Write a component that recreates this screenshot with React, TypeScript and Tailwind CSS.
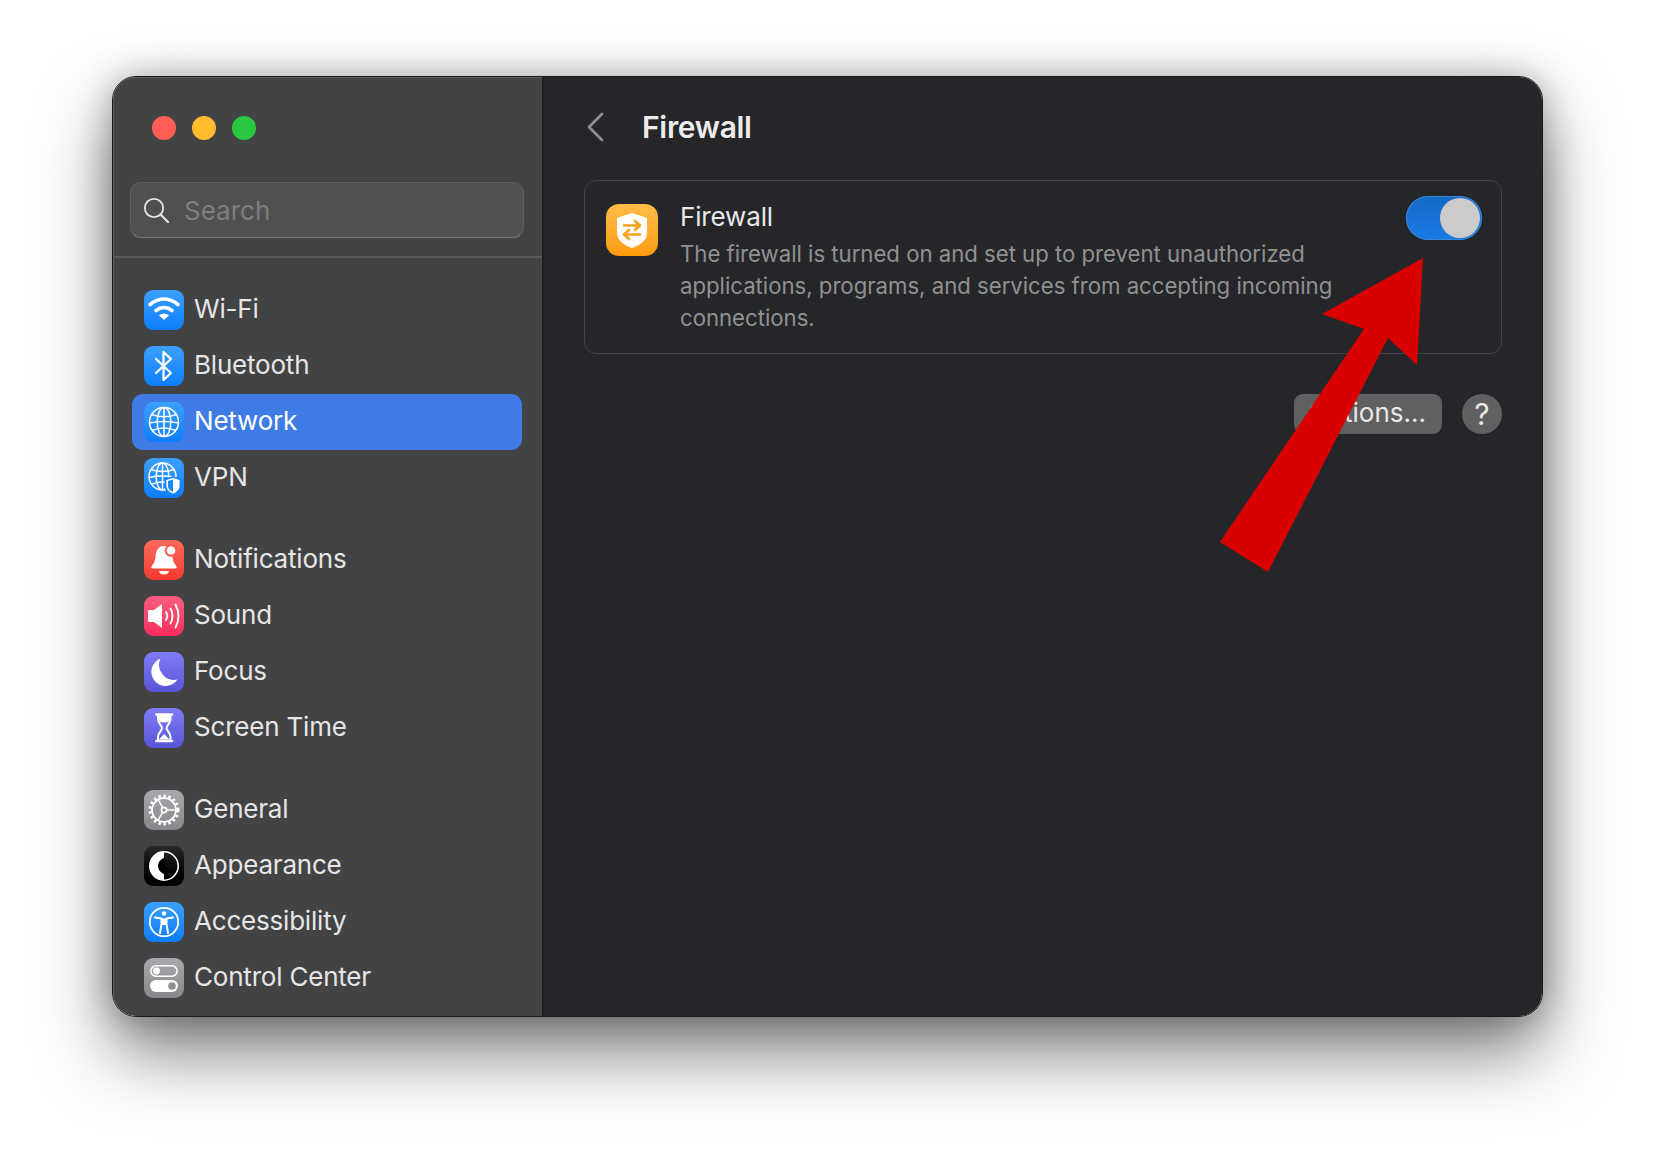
import React from 'react';

const blue = 'bg-linear-to-b from-[#3aa0ff] to-[#0a7dfb]';
const gray = 'bg-linear-to-b from-[#a9a9ad] to-[#87878b]';
const violet = 'bg-linear-to-b from-[#7f7cf6] to-[#5856d6]';

const Globe: React.FC<{ cx?: number; cy?: number; r?: number }> = ({ cx = 20, cy = 20, r = 14.5 }) => {
    const k = r / 14.5;
    return (
        <g transform={`translate(${cx} ${cy}) scale(${k})`} fill="none" stroke="white" strokeWidth="1.6">
            <circle r="14.5" />
            <ellipse rx="6.8" ry="14.5" />
            <path d="M0 -14.5V14.5" />
            <path d="M-12.5 -7.5Q0 -3 12.5 -7.5" />
            <path d="M-14.5 1Q0 -2 14.5 1" />
            <path d="M-12 8.5Q0 3.5 12 8.5" />
        </g>
    );
};

const WifiGlyph = () => (
    <svg viewBox="0 0 40 40" className="w-10 h-10">
        <g fill="none" stroke="white" strokeWidth="3.6" strokeLinecap="round">
            <path d="M6 14.5Q20 3.5 34 14.5" />
            <path d="M12 20.5Q20 14.5 28 20.5" />
        </g>
        <path d="M20 30L15 25.2Q20 22 25 25.2Z" fill="white" />
    </svg>
);

const BluetoothGlyph = () => (
    <svg viewBox="0 0 40 40" className="w-10 h-10">
        <path d="M12 13L27 27L19.5 34V6L27 13L12 27" fill="none" stroke="white" strokeWidth="2.3" strokeLinejoin="round" strokeLinecap="round" />
    </svg>
);

const NetworkGlyph = () => (
    <svg viewBox="0 0 40 40" className="w-10 h-10">
        <Globe />
    </svg>
);

const VpnGlyph = () => (
    <svg viewBox="0 0 40 40" className="w-10 h-10">
        <Globe cx={18.5} cy={18.5} r={13.5} />
        <path d="M29 19L36.5 21.5V28C36.5 32 33 35 29 36.5C25 35 21.5 32 21.5 28V21.5Z" fill="white" stroke="#1a86fb" strokeWidth="1.8" />
        <path d="M29 21.5V34C26 32.8 24 30.5 24 28V23Z" fill="#1a86fb" />
    </svg>
);

const BellGlyph = () => (
    <svg viewBox="0 0 40 40" className="w-10 h-10">
        <path d="M20 6C13.5 6 12 11 11.5 17C11 22 9 24 7.5 26.5C7 27.5 7.5 28.5 9 28.5H31C32.5 28.5 33 27.5 32.5 26.5C31 24 29 22 28.5 17C28 11 26.5 6 20 6Z" fill="white" />
        <path d="M15 31H25C24.5 33.5 22.5 34.5 20 34.5C17.5 34.5 15.5 33.5 15 31Z" fill="white" />
        <circle cx="27" cy="10.5" r="6.3" fill="#fb5a4d" />
        <circle cx="27" cy="10.5" r="4.3" fill="white" />
    </svg>
);

const SoundGlyph = () => (
    <svg viewBox="0 0 40 40" className="w-10 h-10">
        <path d="M4 15.5Q4 14 5.5 14H10L18 8V32L10 26H5.5Q4 26 4 24.5Z" fill="white" />
        <g fill="none" stroke="white" strokeWidth="1.9" strokeLinecap="round">
            <path d="M22 16Q24.5 20 22 24" />
            <path d="M26.5 12.5Q30.5 20 26.5 27.5" />
            <path d="M31.5 8.5Q37.5 20 31.5 31.5" />
        </g>
    </svg>
);

const MoonGlyph = () => (
    <svg viewBox="0 0 40 40" className="w-10 h-10">
        <path d="M16.5 6.5A14.2 14.2 0 1 0 33.5 27.5A15 15 0 0 1 16.5 6.5Z" fill="white" />
    </svg>
);

const HourglassGlyph = () => (
    <svg viewBox="0 0 40 40" className="w-10 h-10">
        <g stroke="white" strokeWidth="2.6" strokeLinecap="round">
            <path d="M12.5 6.5H28" />
            <path d="M12.5 33H28" />
        </g>
        <path d="M14 7H26.5V11C26.5 15 22.5 17.5 22.5 20C22.5 22.5 26.5 25 26.5 29V33H14V29C14 25 18 22.5 18 20C18 17.5 14 15 14 11Z" fill="none" stroke="white" strokeWidth="2" />
        <path d="M14.5 8H26V11C26 13 24 14.5 20.2 14.5C16.5 14.5 14.5 13 14.5 11Z" fill="white" />
        <path d="M20.2 26L25.5 31.5H15Z" fill="white" />
    </svg>
);

const GearGlyph = () => (
    <svg viewBox="0 0 40 40" className="w-10 h-10">
        <g fill="none" stroke="white">
            <circle cx="20" cy="20" r="12" strokeWidth="1.8" />
            <circle cx="20" cy="20" r="14" strokeWidth="3" strokeDasharray="2.4 2.6" />
            <circle cx="20" cy="20" r="2.6" strokeWidth="1.6" />
            <path d="M22.6 20H32M18.7 17.7L14 9.6M18.7 22.3L14 30.4" strokeWidth="1.6" />
        </g>
    </svg>
);

const AppearanceGlyph = () => (
    <svg viewBox="0 0 40 40" className="w-10 h-10">
        <circle cx="20" cy="20" r="14.2" fill="none" stroke="white" strokeWidth="1.6" />
        <path d="M20 5.8A14.2 14.2 0 0 0 20 34.2Z" fill="white" />
        <path d="M20.5 11.5C15.5 14 14 17 14 20C14 23 15.5 26 20.5 28.5Z" fill="black" />
    </svg>
);

const AccessibilityGlyph = () => (
    <svg viewBox="0 0 40 40" className="w-10 h-10">
        <circle cx="20" cy="20" r="14.2" fill="none" stroke="white" strokeWidth="1.8" />
        <circle cx="20" cy="11.5" r="2.2" fill="white" />
        <path d="M11 15.5L17.5 16.5V22L16 31M29 15.5L22.5 16.5V22L24 31" fill="none" stroke="white" strokeWidth="2" strokeLinecap="round" strokeLinejoin="round" />
        <path d="M17.5 16.5H22.5V23H17.5Z" fill="white" />
    </svg>
);

const ControlGlyph = () => (
    <svg viewBox="0 0 40 40" className="w-10 h-10">
        <rect x="6.8" y="7.8" width="26.4" height="10.4" rx="5.2" fill="none" stroke="white" strokeWidth="1.6" />
        <circle cx="12.5" cy="13" r="3.4" fill="white" />
        <rect x="6" y="22" width="28" height="12" rx="6" fill="white" />
        <circle cx="28" cy="28" r="3.8" fill="#8f8f93" />
    </svg>
);

const groups = [
    [
        { name: 'Wi-Fi', bg: blue, icon: <WifiGlyph /> },
        { name: 'Bluetooth', bg: blue, icon: <BluetoothGlyph /> },
        { name: 'Network', bg: blue, icon: <NetworkGlyph />, active: true },
        { name: 'VPN', bg: blue, icon: <VpnGlyph /> },
    ],
    [
        { name: 'Notifications', bg: 'bg-linear-to-b from-[#fb6a5c] to-[#f4392d]', icon: <BellGlyph /> },
        { name: 'Sound', bg: 'bg-linear-to-b from-[#fb5c7e] to-[#f92c5c]', icon: <SoundGlyph /> },
        { name: 'Focus', bg: violet, icon: <MoonGlyph /> },
        { name: 'Screen Time', bg: violet, icon: <HourglassGlyph /> },
    ],
    [
        { name: 'General', bg: gray, icon: <GearGlyph /> },
        { name: 'Appearance', bg: 'bg-linear-to-b from-[#2a2a2a] to-black', icon: <AppearanceGlyph /> },
        { name: 'Accessibility', bg: blue, icon: <AccessibilityGlyph /> },
        { name: 'Control Center', bg: gray, icon: <ControlGlyph /> },
    ],
];

const App: React.FC = () => {
    return (
        <div className="relative w-[1654px] h-[1164px] overflow-hidden bg-white pt-[76px] pl-[112px] font-[Inter,sans-serif]">
            <div className="flex w-[1431px] h-[941px] rounded-[24px] overflow-hidden border border-[#1c1c1e] shadow-[0_36px_70px_rgba(0,0,0,0.5),0_0_36px_rgba(0,0,0,0.28)]">
                {/* sidebar */}
                <aside className="relative w-[431px] shrink-0 bg-[#424345] border-r-2 border-[#1b1c1e] overflow-hidden shadow-[inset_1px_1px_0_#5b5c5e]">
                    <div className="flex gap-4 pt-[39px] pl-[39px]">
                        <span className="w-6 h-6 rounded-full bg-[#ff5f57]" />
                        <span className="w-6 h-6 rounded-full bg-[#febc2e]" />
                        <span className="w-6 h-6 rounded-full bg-[#28c840]" />
                    </div>
                    <div className="mt-[42px] ml-[17px] mr-[18px] h-[56px] flex items-center gap-[15px] pl-[12px] rounded-[11px] bg-[#4f5051] border border-[#5c5d5f] border-b-[#77787a]">
                        <svg viewBox="0 0 26 26" className="w-[26px] h-[26px]">
                            <circle cx="11" cy="11" r="9.2" fill="none" stroke="#e4e4e4" strokeWidth="1.8" />
                            <path d="M17.5 17.5L25 25" stroke="#e4e4e4" strokeWidth="2.2" strokeLinecap="round" />
                        </svg>
                        <span className="text-[26px] text-[#7d7e80]">Search</span>
                    </div>
                    <div className="mt-[18px] h-[2px] bg-[#595a5c]" />
                    <nav className="pt-[24px]">
                        {groups.map((rows, i) => (
                            <ul key={i} className="mb-[26px]">
                                {rows.map((row) => (
                                    <li
                                        key={row.name}
                                        className={`ml-[19px] mr-[20px] h-[56px] flex items-center gap-[10px] px-[12px] rounded-[11px] ${'active' in row && row.active ? 'bg-[#3f7be5] text-white' : 'text-[#e6e6e6]'}`}
                                    >
                                        <span className={`w-10 h-10 shrink-0 rounded-[9px] ${row.bg}`}>{row.icon}</span>
                                        <span className="text-[26px] tracking-[-0.2px] -mt-[3px]">{row.name}</span>
                                    </li>
                                ))}
                            </ul>
                        ))}
                        {/* top edge of the next row's icon, cut off by the window */}
                        <span className="block ml-[31px] mt-[8px] w-10 h-10 rounded-[9px] bg-linear-to-r from-[#8a5058] to-[#4f7f70]" />
                    </nav>
                </aside>

                {/* main */}
                <main className="flex-1 bg-[#25262a] pt-[26px] pl-[40px] pr-[40px]">
                    <header className="flex items-center h-[50px]">
                        <svg viewBox="0 0 18 30" className="w-[18px] h-[30px] ml-[2px] -mt-[2px]">
                            <path d="M16 2L3 15L16 28" fill="none" stroke="#8d8e90" strokeWidth="2.8" strokeLinecap="round" strokeLinejoin="round" />
                        </svg>
                        <h1 className="ml-[38px] -mt-[1px] text-[30px] font-semibold text-[#ececec] tracking-[-0.3px]">Firewall</h1>
                    </header>
                    <section className="relative mt-[27px] h-[174px] flex rounded-[12px] border border-[#414245] pt-[23px] pl-[21px] pr-[19px]">
                        <span className="w-[52px] h-[52px] shrink-0 rounded-[13px] bg-linear-to-b from-[#ffbc45] to-[#ff9d0a]">
                            <svg viewBox="0 0 52 52" className="w-[52px] h-[52px]">
                                <path d="M26 9L41 14V29C41 37 33 41.5 26 44C19 41.5 11 37 11 29V14Z" fill="white" />
                                <g fill="none" stroke="#f6a11f" strokeWidth="2.6" strokeLinecap="round" strokeLinejoin="round">
                                    <path d="M18 21.5H33M29 17L34 21.5L29 26" />
                                    <path d="M34 30.5H19M23 26L18 30.5L23 35" />
                                </g>
                            </svg>
                        </span>
                        <div className="ml-[22px] -mt-[5px] w-[670px]">
                            <div className="text-[26px] leading-[36px] text-[#e8e8e8] tracking-[-0.15px]">Firewall</div>
                            <p className="mt-[3px] text-[22.2px] leading-[32px] text-[#909193] tracking-[-0.02px]">
                                The firewall is turned on and set up to prevent unauthorized applications, programs, and services from accepting incoming connections.
                            </p>
                        </div>
                        <div className="ml-auto -mt-[8px] w-[76px] h-[44px] shrink-0 flex items-center justify-end px-[2px] rounded-full bg-linear-to-b from-[#1469c4] to-[#1a7be6] shadow-[inset_0_0_0_1px_#3a86d8]">
                            <span className="w-10 h-10 rounded-full bg-[#cbcbcb]" />
                        </div>
                    </section>
                    <div className="mt-[40px] flex justify-end gap-[20px]">
                        <button className="w-[148px] h-[40px] rounded-[9px] bg-[#5f6062] text-right pr-[16px] pb-[3px] text-[26px] leading-[34px] text-[#e8e8e8]">Options...</button>
                        <button className="w-10 h-10 rounded-full bg-[#5f6062] text-[30px] leading-[38px] text-[#e8e8e8]">?</button>
                    </div>
                </main>
            </div>

            {/* annotation arrow over the window */}
            <svg viewBox="0 0 1654 1164" className="absolute inset-0 w-[1654px] h-[1164px] pointer-events-none">
                <path d="M1423 258L1417 365L1388 338L1268 572L1220 542L1364 329L1322 314Z" fill="#da0000" />
            </svg>
        </div>
    );
};

export default App;
